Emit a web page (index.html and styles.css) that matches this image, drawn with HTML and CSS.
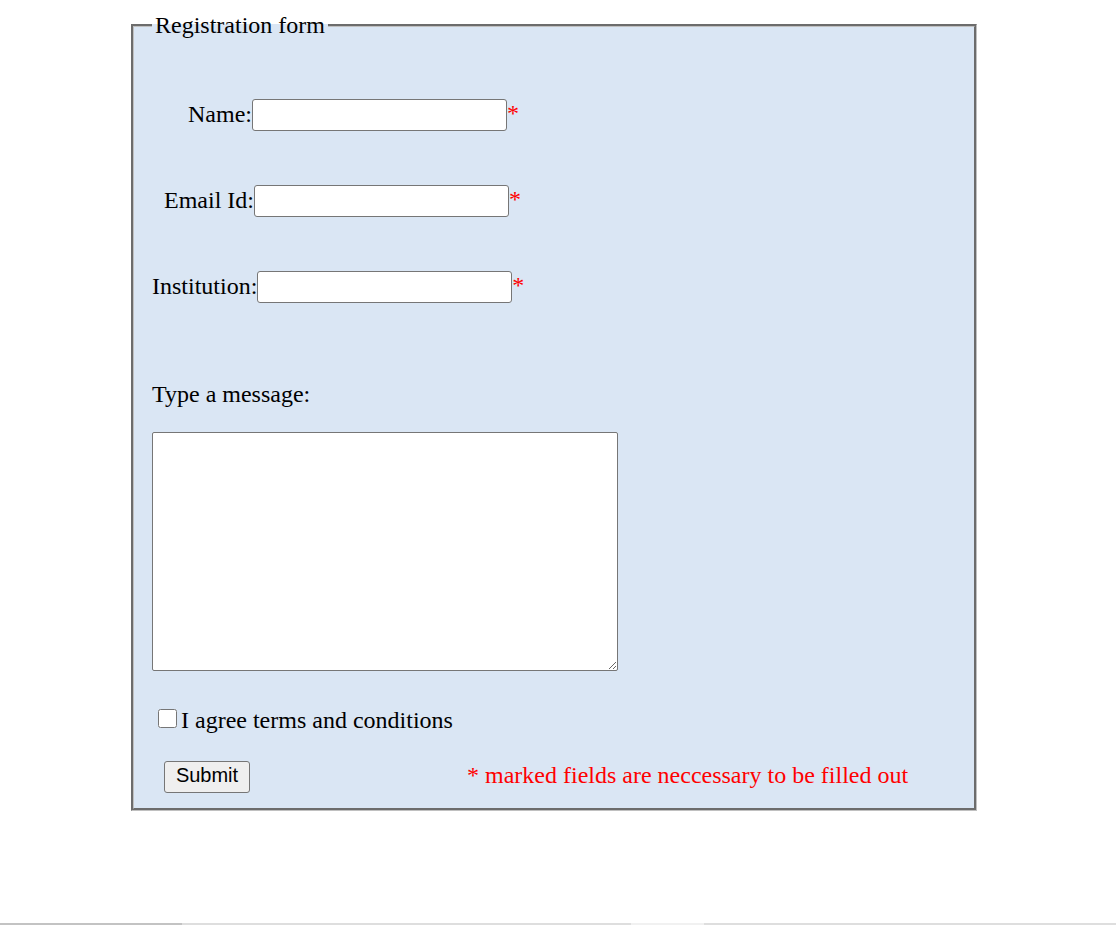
FILE: index.html
```html
<!DOCTYPE html>
<html lang="en">
<head>
<meta charset="utf-8">
<title>Registration form</title>
<link rel="stylesheet" href="styles.css">
</head>
<body>
<form class="reg" action="#">
  <fieldset class="box">
    <legend class="box-title">Registration form</legend>
    <div class="fields">
      <div class="field">
        <label class="field-label indent-6" for="name">Name:</label><input class="text-input" type="text" id="name"><span class="req">*</span>
      </div>
      <div class="field">
        <label class="field-label indent-2" for="email">Email Id:</label><input class="text-input" type="text" id="email"><span class="req">*</span>
      </div>
      <div class="field">
        <label class="field-label" for="inst">Institution:</label><input class="text-input" type="text" id="inst"><span class="req">*</span>
      </div>
    </div>
    <label class="msg-label" for="msg">Type a message:</label>
    <textarea class="msg" id="msg"></textarea>
    <div class="agree">
      <input class="check" type="checkbox" id="agree"><label for="agree">I agree terms and conditions</label>
    </div>
    <div class="actions">
      <button class="submit" type="submit">Submit</button>
      <span class="note">* marked fields are neccessary to be filled out</span>
    </div>
  </fieldset>
</form>
<div class="hbar">
  <span class="hbar-a"></span><span class="hbar-b"></span><span class="hbar-c"></span><span class="hbar-d"></span>
</div>
</body>
</html>
```

FILE: styles.css
```css
html, body {
  margin: 0;
  padding: 0;
  background: #ffffff;
}

body {
  font-family: "Liberation Serif", "Times New Roman", serif;
  font-size: 24px;
  color: #000000;
  width: 1116px;
  height: 925px;
  overflow: hidden;
}

.reg {
  margin: 0;
  padding: 12px 0 0 131px;
}

.box {
  box-sizing: border-box;
  width: 846px;
  margin: 0;
  padding: 0 18px 15px 18px;
  border: 3px groove #c0c0c0;
  background: #dae6f4;
}

.box-title {
  padding: 0 3px;
  line-height: 27px;
  font-size: 24px;
}

.fields {
  display: flex;
  flex-direction: column;
  gap: 54px;
  margin-top: 60px;
}

.field {
  display: flex;
  align-items: baseline;
  height: 32px;
  line-height: 27px;
}

.indent-6 { padding-left: 36px; }
.indent-2 { padding-left: 12px; }

.text-input {
  box-sizing: border-box;
  width: 255px;
  height: 32px;
  margin: 0;
  padding: 1px 3px;
  border: 1px solid #767676;
  border-radius: 3px;
  background: #ffffff;
  font-family: "Liberation Sans", Arial, sans-serif;
  font-size: 20px;
}

.req {
  color: #ff0000;
  position: relative;
  top: -1px;
}

.msg-label {
  display: block;
  margin-top: 78px;
  line-height: 27px;
}

.msg {
  display: block;
  box-sizing: border-box;
  width: 466px;
  height: 239px;
  margin: 24px 0 0 0;
  padding: 3px;
  border: 1px solid #767676;
  border-radius: 2px;
  background: #ffffff;
  font-family: "Liberation Mono", monospace;
  font-size: 20px;
}

.agree {
  display: flex;
  align-items: flex-start;
  margin-top: 36px;
  line-height: 27px;
}

.check {
  width: 19px;
  height: 19px;
  margin: 2px 4px 0 6px;
}

.actions {
  display: flex;
  align-items: center;
  margin-top: 27px;
}

.submit {
  box-sizing: border-box;
  width: 86px;
  height: 32px;
  margin: 0 0 0 12px;
  padding: 0 0 3px 0;
  border: 1px solid #767676;
  border-radius: 3px;
  background: #efefef;
  font-family: "Liberation Sans", Arial, sans-serif;
  font-size: 20px;
  color: #000000;
}

.note {
  color: #ff0000;
  margin-left: 217px;
  line-height: 27px;
  position: relative;
  top: -2px;
}

.hbar {
  display: flex;
  height: 2px;
  margin-top: 112px;
}

.hbar-a { width: 182px; background: #c3c3c3; }
.hbar-b { width: 449px; background: #dedede; }
.hbar-c { width: 73px; background: #f1f1f1; }
.hbar-d { flex: 1; background: #dedede; }
```
